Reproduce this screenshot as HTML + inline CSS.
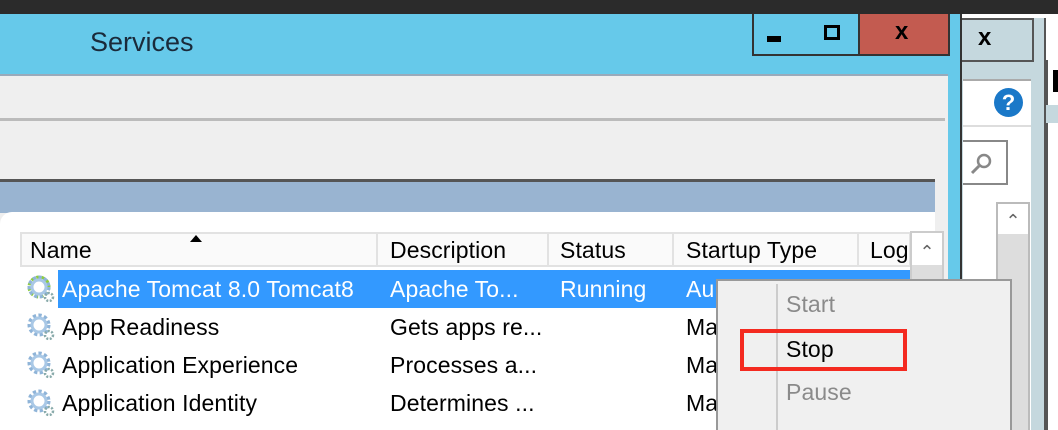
<!DOCTYPE html>
<html style="width:1058px;height:430px;overflow:hidden"><head><meta charset="utf-8"><style>
*{margin:0;padding:0;box-sizing:border-box}
body{width:1058px;height:430px;overflow:hidden;position:relative;background:#fff;font-family:"Liberation Sans",sans-serif;}
.a{position:absolute}
.t{position:absolute;font-size:23px;color:#000;white-space:nowrap;letter-spacing:0.1px}
</style></head><body>
<div class="a" style="left:0;top:0;width:1058px;height:14px;background:#2b2b2b"></div>
<div class="a" style="left:1046px;top:60px;width:12px;height:370px;background:#fff;border-left:2px solid #555"></div>
<div class="a" style="left:1046px;top:105px;width:12px;height:18px;background:#c5d8de"></div>
<div class="a" style="left:1053px;top:70px;width:5px;height:22px;background:#000"></div>
<div class="a" style="left:962px;top:18px;width:84px;height:412px;background:#c5d8de;border-right:2px solid #555"></div>
<div class="a" style="left:962px;top:18px;width:72px;height:44px;background:#c5d8de;border:2px solid #555;border-left:none"></div>
<div class="a" style="left:978px;top:24px;font-size:24px;font-weight:bold">x</div>
<div class="a" style="left:963px;top:79px;width:68px;height:351px;background:#fff;border-top:2px solid #aaa"></div>
<div class="a" style="left:963px;top:125px;width:68px;height:2px;background:#ddd"></div>
<div class="a" style="left:994px;top:88px;width:29px;height:29px;border-radius:50%;background:#1a78c8;color:#fff;font-weight:bold;font-size:22px;text-align:center;line-height:29px">?</div>
<div class="a" style="left:963px;top:140px;width:45px;height:45px;border:2px solid #888;border-left:none"></div>
<svg class="a" style="left:965px;top:150px" width="30" height="28"><circle cx="19" cy="11" r="6" fill="none" stroke="#888" stroke-width="2.5"/><line x1="14" y1="16" x2="7" y2="23" stroke="#888" stroke-width="3"/></svg>
<div class="a" style="left:996px;top:202px;width:34px;height:228px;background:#ddd;border:2px solid #bbb;border-bottom:none"></div>
<div class="a" style="left:998px;top:204px;width:30px;height:30px;background:#fff;font-size:18px;color:#666;text-align:center;line-height:34px">&#8963;</div>
<div class="a" style="left:0;top:14px;width:962px;height:416px;background:#66c9ea;border-right:2px solid #333"></div>
<div class="t" style="left:90px;top:27px;font-size:27px;color:#1a2a3a;letter-spacing:0">Services</div>
<div class="a" style="left:752px;top:14px;width:56px;height:42px;background:#66c9ea;border:2px solid #333;border-top:none"></div>
<div class="a" style="left:767px;top:36px;width:14px;height:6px;background:#000"></div>
<div class="a" style="left:806px;top:14px;width:54px;height:42px;background:#66c9ea;border-bottom:2px solid #333;border-right:2px solid #333"></div>
<div class="a" style="left:824px;top:25px;width:16px;height:15px;border:3px solid #000"></div>
<div class="a" style="left:860px;top:14px;width:90px;height:42px;background:#c35b50;border-bottom:2px solid #333;border-right:2px solid #333"></div>
<div class="a" style="left:895px;top:18px;font-size:24px;font-weight:bold">x</div>
<div class="a" style="left:0;top:74px;width:948px;height:356px;background:#efefef;border-top:2px solid #9ab"></div>
<div class="a" style="left:0;top:118px;width:945px;height:3px;background:#bbb"></div>
<div class="a" style="left:0;top:179px;width:935px;height:3px;background:#555"></div>
<div class="a" style="left:0;top:182px;width:935px;height:31px;background:#99b4d1"></div>
<div class="a" style="left:0;top:212px;width:935px;height:218px;background:#fff;border-top-left-radius:12px"></div>
<div class="a" style="left:20px;top:232px;width:891px;height:35px;background:#fafafa;border:2px solid #e2e2e2"></div>
<div class="a" style="left:376px;top:234px;width:2px;height:33px;background:#e2e2e2"></div>
<div class="a" style="left:547px;top:234px;width:2px;height:33px;background:#e2e2e2"></div>
<div class="a" style="left:672px;top:234px;width:2px;height:33px;background:#e2e2e2"></div>
<div class="a" style="left:857px;top:234px;width:2px;height:33px;background:#e2e2e2"></div>
<div class="t" style="left:30px;top:237px">Name</div>
<div class="a" style="left:190px;top:235px;width:0;height:0;border-left:6px solid transparent;border-right:6px solid transparent;border-bottom:7px solid #000"></div>
<div class="t" style="left:390px;top:237px">Description</div>
<div class="t" style="left:560px;top:237px">Status</div>
<div class="t" style="left:686px;top:237px">Startup Type</div>
<div class="t" style="left:870px;top:237px;width:40px;overflow:hidden">Log</div>
<div class="a" style="left:910px;top:231px;width:34px;height:199px;background:#ddd;border:2px solid #ccc;border-bottom:none"></div>
<div class="a" style="left:912px;top:233px;width:30px;height:32px;background:#fff;font-size:18px;color:#666;text-align:center;line-height:38px">&#8963;</div>
<div class="a" style="left:58px;top:270px;width:852px;height:38px;background:#3399ff"></div>
<div class="t" style="left:62px;top:276px;color:#fff">Apache Tomcat 8.0 Tomcat8</div>
<div class="t" style="left:390px;top:276px;color:#fff">Apache To...</div>
<div class="t" style="left:560px;top:276px;color:#fff">Running</div>
<div class="t" style="left:686px;top:276px;color:#fff">Au</div>
<div class="t" style="left:62px;top:314px">App Readiness</div>
<div class="t" style="left:390px;top:314px">Gets apps re...</div>
<div class="t" style="left:686px;top:314px">Ma</div>
<div class="t" style="left:62px;top:352px">Application Experience</div>
<div class="t" style="left:390px;top:352px">Processes a...</div>
<div class="t" style="left:686px;top:352px">Ma</div>
<div class="t" style="left:62px;top:390px">Application Identity</div>
<div class="t" style="left:390px;top:390px">Determines ...</div>
<div class="t" style="left:686px;top:390px">Ma</div>
<svg class="a" style="left:0;top:270px" width="60" height="160">
<defs><g id="g"><circle cx="12" cy="12" r="9" fill="none" stroke="#8fb4d8" stroke-width="5" stroke-dasharray="3 2.2"/><circle cx="12" cy="12" r="7" fill="none" stroke="#a9c8e6" stroke-width="3"/><circle cx="22" cy="22" r="4" fill="none" stroke="#8aa" stroke-width="2.5" stroke-dasharray="2 1.5"/></g></defs>
<g transform="translate(27,5)"><circle cx="12" cy="12" r="10" fill="none" stroke="#8ecc3e" stroke-width="3" stroke-dasharray="3 2.5"/><use href="#g"/></g>
<use href="#g" transform="translate(27,43)"/>
<use href="#g" transform="translate(27,81)"/>
<use href="#g" transform="translate(27,119)"/>
</svg>
<div class="a" style="left:716px;top:279px;width:296px;height:151px;background:#f0f0f0;border:2px solid #999;border-bottom:none"></div>
<div class="a" style="left:776px;top:284px;width:2px;height:146px;background:#ccc"></div>
<div class="t" style="left:786px;top:291px;color:#8a8a8a">Start</div>
<div class="t" style="left:786px;top:336px">Stop</div>
<div class="t" style="left:786px;top:379px;color:#8a8a8a">Pause</div>
<div class="a" style="left:740px;top:329px;width:167px;height:42px;border:4px solid #f42a20"></div>
</body></html>
